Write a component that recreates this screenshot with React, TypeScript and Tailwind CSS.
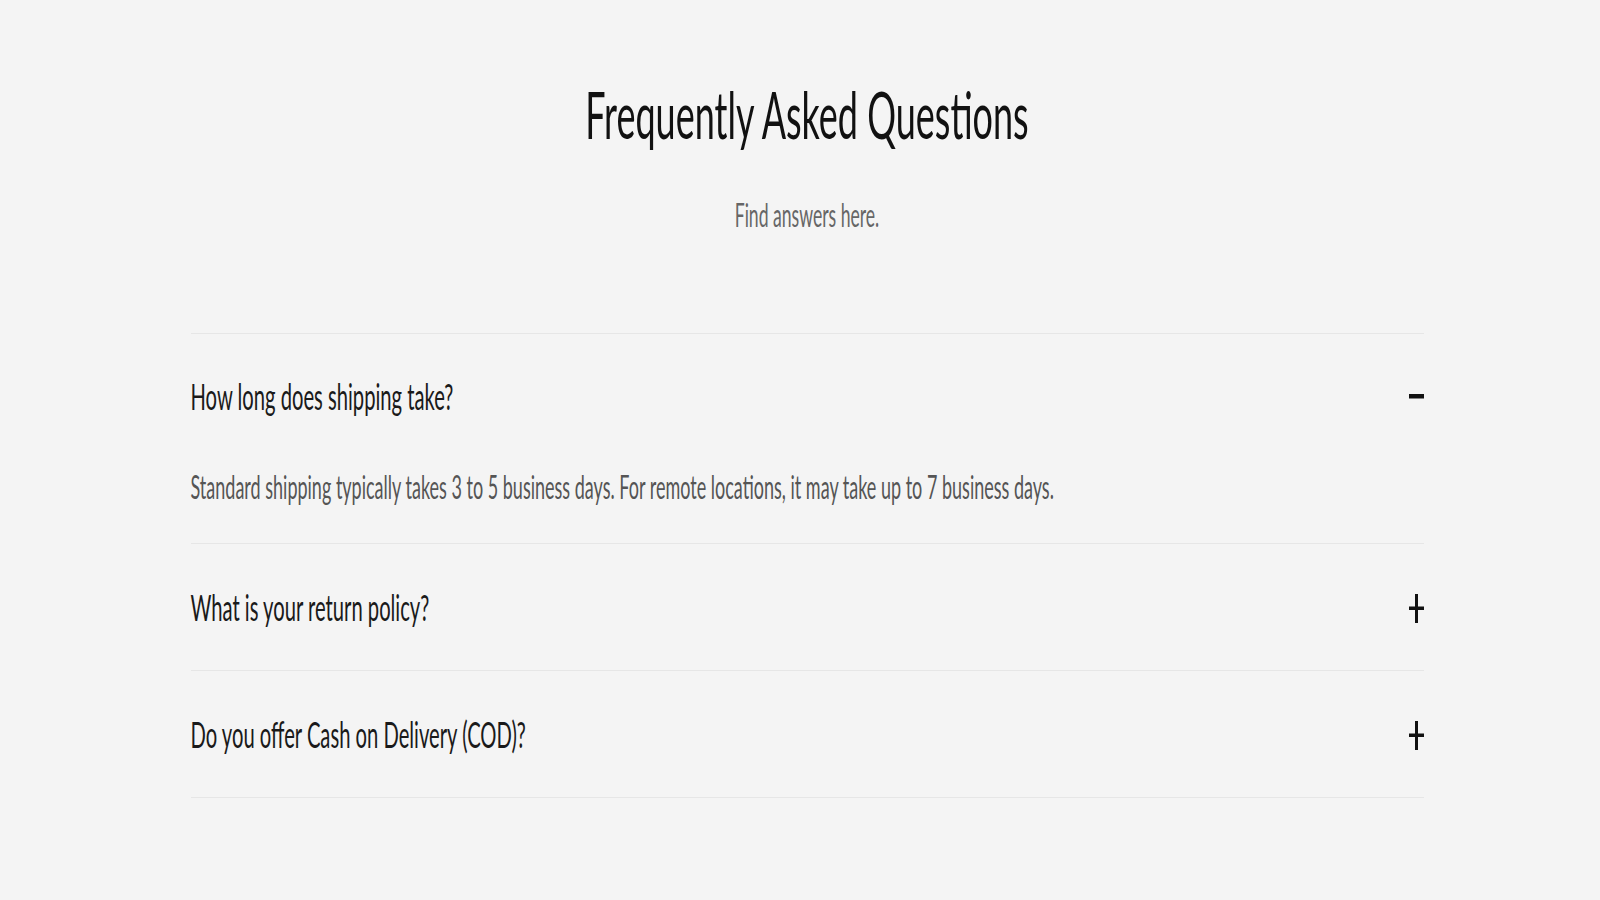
import { useState } from "react";

const faqs = [
  {
    q: "How long does shipping take?",
    a: "Standard shipping typically takes 3 to 5 business days. For remote locations, it may take up to 7 business days.",
  },
  {
    q: "What is your return policy?",
    a: "You can return any unused item within 14 days of delivery for a full refund.",
  },
  {
    q: "Do you offer Cash on Delivery (COD)?",
    a: "Yes, Cash on Delivery is available for most locations.",
  },
];

function Plus() {
  return (
    <svg width="15" height="29" viewBox="0 0 15 29" className="mt-[6px] fill-[#111]">
      <rect x="0" y="12.5" width="15" height="3.5" />
      <rect x="6" y="0" width="3" height="29" />
    </svg>
  );
}

function Minus() {
  return (
    <svg width="15" height="5" viewBox="0 0 15 5" className="mt-[2px] fill-[#111]">
      <rect x="0" y="0" width="15" height="4.5" />
    </svg>
  );
}

export default function App() {
  const [open, setOpen] = useState<number | null>(0);

  return (
    <div className="min-h-screen bg-[#f4f4f4] pl-[14px] font-['Lato',sans-serif]">
      <div className="mx-auto w-[1233px] pb-[100px]">
        <div className="flex justify-center pt-[93px]">
          <h2 className="scale-y-[1.85] text-[36px] leading-[40px] text-[#111]">
            Frequently Asked Questions
          </h2>
        </div>
        <div className="mt-[71px] mb-[105px] flex justify-center">
          <p className="scale-y-[1.85] text-[17.6px] leading-[24px] text-[#666]">
            Find answers here.
          </p>
        </div>

        <div className="border-b border-[#e6e6e6]">
          {faqs.map((f, i) => (
            <div key={i} className="border-t border-[#e6e6e6]">
              <button
                onClick={() => setOpen(open === i ? null : i)}
                className={
                  "flex w-full items-center justify-between pb-[3px] text-left " +
                  (i === 0 ? "h-[125px]" : "h-[126px]")
                }
              >
                <span className="block origin-left scale-y-[1.85] text-[20.2px] leading-[24px] text-[#1a1a1a]">
                  {f.q}
                </span>
                {open === i ? <Minus /> : <Plus />}
              </button>
              {open === i && (
                <div className="pt-[17px] pb-[47px]">
                  <p className="origin-left scale-y-[1.85] text-[18px] leading-[20px] text-[#555]">
                    {f.a}
                  </p>
                </div>
              )}
            </div>
          ))}
        </div>
      </div>
    </div>
  );
}
